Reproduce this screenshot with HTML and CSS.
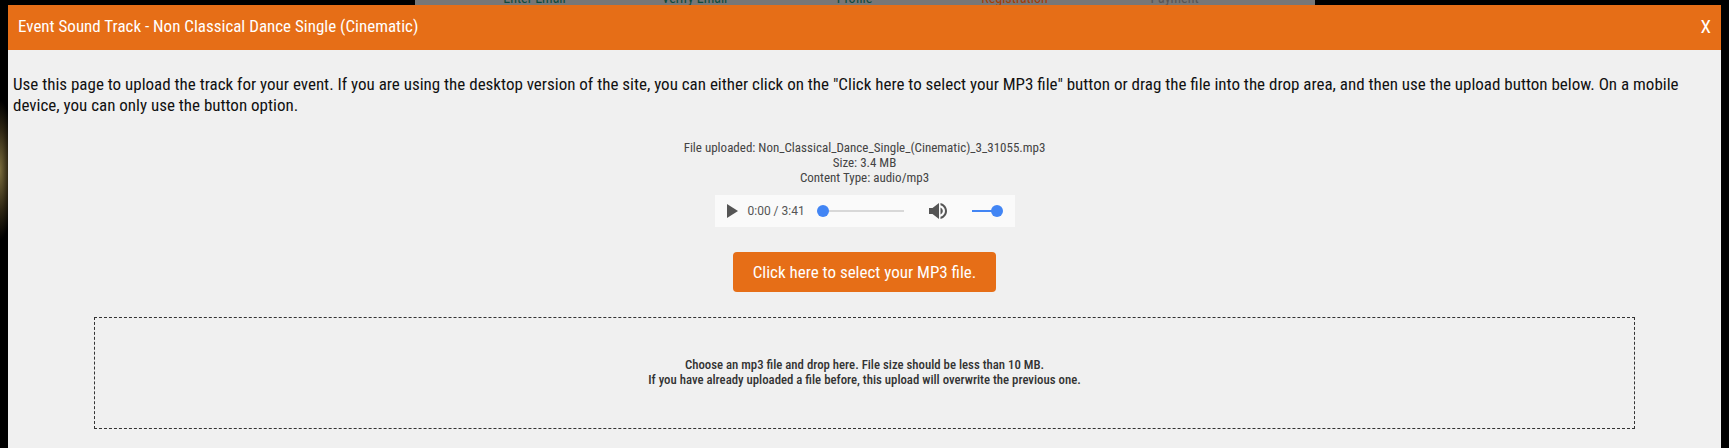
FILE: index.html
```html
<!DOCTYPE html>
<html lang="en">
<head>
  <meta charset="UTF-8">
  <title>Event Sound Track</title>
  <link rel="stylesheet" href="styles.css">
</head>
<body>
  <div class="steps">
    <span class="step">Enter Email</span>
    <span class="step">Verify Email</span>
    <span class="step">Profile</span>
    <span class="step step-current">Registration</span>
    <span class="step step-next">Payment</span>
  </div>

  <div class="modal">
    <div class="modal-header">
      <span class="modal-title">Event Sound Track - Non Classical Dance Single (Cinematic)</span>
      <span class="modal-close">X</span>
    </div>
    <div class="modal-body">
      <p class="intro">Use this page to upload the track for your event. If you are using the desktop version of the site, you can either click on the "Click here to select your MP3 file" button or drag the file into the drop area, and then use the upload button below. On a mobile device, you can only use the button option.</p>

      <div class="file-info">
        <div>File uploaded: Non_Classical_Dance_Single_(Cinematic)_3_31055.mp3</div>
        <div>Size: 3.4 MB</div>
        <div>Content Type: audio/mp3</div>
      </div>

      <div class="player">
        <svg class="play-icon" width="11" height="14" viewBox="0 0 11 14"><path d="M0 0L11 7L0 14Z"/></svg>
        <span class="time">0:00 / 3:41</span>
        <div class="seek"><div class="thumb"></div></div>
        <svg class="volume-icon" width="18" height="16" viewBox="0 0 18 16"><path d="M0 5H3.5L10 0V16L3.5 11H0Z"/><path d="M11.5 4.5C13 5.2 13.8 6.5 13.8 8C13.8 9.5 13 10.8 11.5 11.5Z"/><path d="M11.5 0V2.2C14.2 3 16 5.3 16 8C16 10.7 14.2 13 11.5 13.8V16C15.3 15.1 18 11.9 18 8C18 4.1 15.3 0.9 11.5 0Z"/></svg>
        <div class="volume"><div class="thumb"></div></div>
      </div>

      <button class="select-btn">Click here to select your MP3 file.</button>

      <div class="drop-area">
        <div>Choose an mp3 file and drop here. File size should be less than 10 MB.</div>
        <div>If you have already uploaded a file before, this upload will overwrite the previous one.</div>
      </div>
    </div>
  </div>
</body>
</html>
```

FILE: styles.css
```css
* {
  box-sizing: border-box;
}
html, body {
  height: 100%;
}
body {
  margin: 0;
  overflow: hidden;
  font-family: "Roboto", sans-serif;
  font-stretch: 75%;
  background-color: #000;
  background-image: radial-gradient(ellipse 14px 70px at 0 170px, #7a6c3c 0%, #2c2412 60%, rgba(0, 0, 0, 0) 100%);
  display: flex;
  flex-direction: column;
}
.steps {
  width: 900px;
  height: 5px;
  margin: 0 auto;
  padding: 0 40px;
  background: #777;
  display: flex;
  align-items: flex-end;
  overflow: hidden;
  flex-shrink: 0;
}
.step {
  width: 160px;
  flex-shrink: 0;
  text-align: center;
  font-size: 14px;
  line-height: 16px;
  margin-bottom: -1px;
  color: #0c4a3c;
  white-space: nowrap;
}
.step-current {
  color: #a03c08;
}
.step-next {
  color: #555;
}
.modal {
  flex: 1;
  margin: 0 8px;
  background: #f0f0f0;
}
.modal-header {
  height: 45px;
  padding: 0 10px 4px;
  background: #e66e17;
  color: #fff;
  display: flex;
  align-items: center;
  justify-content: space-between;
}
.modal-title {
  font-size: 17px;
}
.modal-close {
  font-size: 19px;
  margin-top: 2px;
}
.modal-body {
  padding: 0 5px;
  display: flex;
  flex-direction: column;
  align-items: center;
}
.intro {
  width: 100%;
  margin: 24px 0 0;
  font-size: 17px;
  line-height: 21px;
  color: #111;
}
.file-info {
  margin-top: 24px;
  font-size: 13px;
  line-height: 15px;
  color: #444;
  text-align: center;
}
.player {
  width: 300px;
  height: 32px;
  margin-top: 10px;
  padding-left: 12px;
  background: #fafafa;
  display: flex;
  align-items: center;
  font-stretch: 100%;
}
.play-icon, .volume-icon {
  fill: #555;
  flex-shrink: 0;
}
.time {
  margin-left: 10px;
  width: 69px;
  font-size: 12px;
  color: #555;
  white-space: nowrap;
}
.seek {
  width: 87px;
  height: 2px;
  background: #d8d8d8;
  position: relative;
}
.volume {
  width: 28px;
  height: 2px;
  margin-left: 25px;
  background: #4285f4;
  position: relative;
}
.volume-icon {
  margin-left: 25px;
}
.thumb {
  position: absolute;
  width: 12px;
  height: 12px;
  top: -5px;
  border-radius: 50%;
  background: #4285f4;
}
.seek .thumb {
  left: 0;
}
.volume .thumb {
  right: -3px;
}
.select-btn {
  width: 263px;
  height: 40px;
  margin-top: 25px;
  border: none;
  border-radius: 4px;
  background: #e66e17;
  color: #fff;
  font-family: inherit;
  font-stretch: inherit;
  font-size: 17px;
}
.drop-area {
  width: 1541px;
  height: 112px;
  margin-top: 25px;
  padding-top: 39px;
  border: 1px dashed #333;
  font-size: 12.8px;
  font-weight: 500;
  line-height: 15.3px;
  color: #333;
  text-align: center;
}
```
